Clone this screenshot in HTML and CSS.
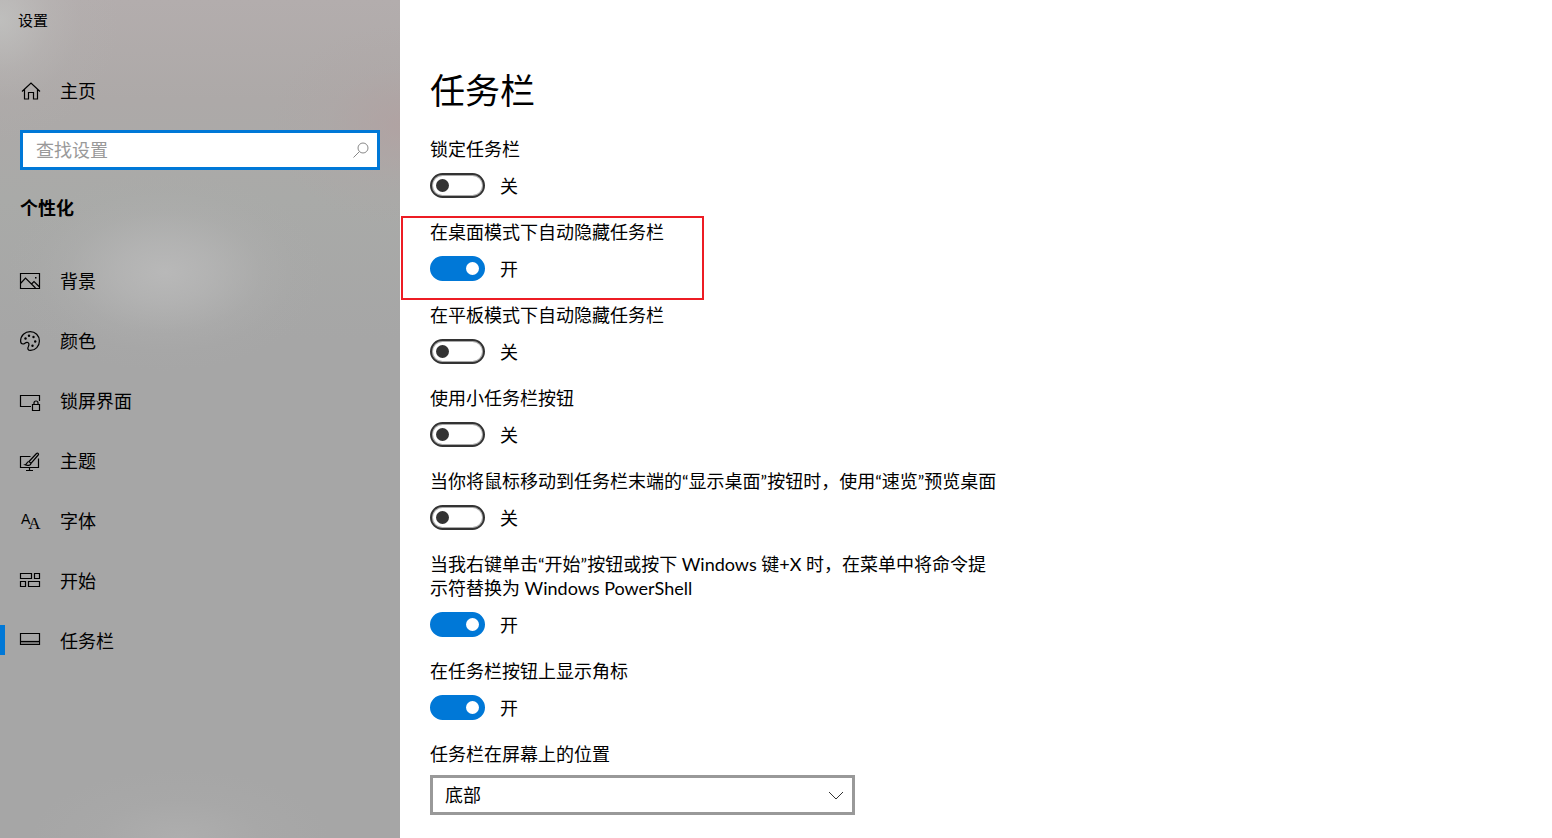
FILE: index.html
```html
<!DOCTYPE html>
<html lang="zh-CN">
<head>
    <meta charset="UTF-8">
    <meta name="viewport" content="width=device-width, initial-scale=1.0">
    <title>设置</title>
    <link rel="stylesheet" href="styles.css">
</head>
<body>
    <div class="window">
        <aside class="sidebar">
            <div class="window-title">设置</div>
            <a class="nav-link" href="#home">
                <svg class="icon" viewBox="0 0 20 20" aria-hidden="true">
                    <path d="M2 10.500 11 2l9 8.500M4.500 8.500v9.500h4v-6.500h5v6.500h4V8.500"/>
                </svg>
                <span>主页</span>
            </a>
            <form class="search">
                <input class="search-input" type="search" placeholder="查找设置" aria-label="查找设置">
                <svg class="search-icon" viewBox="0 0 16 16" aria-hidden="true">
                    <circle cx="10" cy="6" r="5"/>
                    <path d="M6.500 9.500.5 15.500"/>
                </svg>
            </form>
            <h2 class="section-title">个性化</h2>
            <nav class="nav">
                <a class="nav-link" href="#background">
                    <svg class="icon" viewBox="0 0 20 20" aria-hidden="true">
                        <path d="M.5 2.500h19v15H.5zM.5 12.500l5-5.500 10 10M11.500 13l2.500-2.500 5.500 5.500"/>
                        <path class="fill" d="M15 6h1.500v1.500H15z"/>
                    </svg>
                    <span>背景</span>
                </a>
                <a class="nav-link" href="#colors">
                    <svg class="icon" viewBox="0 0 20 20" aria-hidden="true">
                        <path d="M.6 10C.6 4.500 5 .6 10.200.6c5 0 9.200 4 9.200 9.300 0 5.200-4 9.500-8.800 9.500-3 0-3.200-2-2.300-3.700 1-2 1-4-1-4.300-2-.3-2.500 1.600-4.300 1.600C1.300 13 .6 11.700.6 10z"/>
                        <g class="fill">
                            <circle cx="5.500" cy="7.500" r="1.200"/>
                            <circle cx="9" cy="4.800" r="1.200"/>
                            <circle cx="13.500" cy="6" r="1.200"/>
                            <circle cx="15.200" cy="10.500" r="1.200"/>
                            <circle cx="12.500" cy="14.800" r="1.200"/>
                        </g>
                    </svg>
                    <span>颜色</span>
                </a>
                <a class="nav-link" href="#lockscreen">
                    <svg class="icon" viewBox="0 0 20 20" aria-hidden="true">
                        <path d="M11 15.500H.5v-11h19V10M12.500 13.500h7v6h-7zM14 13.500v-1.500a2 2 0 0 1 4 0v1.500"/>
                    </svg>
                    <span>锁屏界面</span>
                </a>
                <a class="nav-link" href="#themes">
                    <svg class="icon" viewBox="0 0 20 20" aria-hidden="true">
                        <path d="M10.500 5.500H.5v11h18V7.500M9.500 16.500v3M6 19.500h7"/>
                        <path d="M9 10.500 16.500 2.500c1.200-1.200 2.700.3 1.700 1.500L11 12.300M9 10.500c-2.500 0-1.500 2.800-4 3.300 2.500 1.200 6 .7 6-1.500z"/>
                    </svg>
                    <span>主题</span>
                </a>
                <a class="nav-link" href="#fonts">
                    <svg class="icon" viewBox="0 0 20 20" aria-hidden="true">
                        <text class="letters" x="1" y="13">A<tspan class="letter-large" dx="-2" dy="5">A</tspan></text>
                    </svg>
                    <span>字体</span>
                </a>
                <a class="nav-link" href="#start">
                    <svg class="icon" viewBox="0 0 20 20" aria-hidden="true">
                        <path d="M.5 2.500h11v5H.5zM14.500 2.500h5v5h-5zM.5 10.500h5v5h-5zM8.500 10.500h11v5h-11z"/>
                    </svg>
                    <span>开始</span>
                </a>
                <a class="nav-link active" href="#taskbar" aria-current="page">
                    <svg class="icon" viewBox="0 0 20 20" aria-hidden="true">
                        <path d="M.5 2.500h19v11H.5z"/>
                        <path class="shade" d="M1 10h18v3H1z"/>
                        <path d="M.5 10.500h19"/>
                    </svg>
                    <span>任务栏</span>
                </a>
            </nav>
        </aside>

        <main class="content">
            <h1 class="page-title">任务栏</h1>

            <div class="setting">
                <label class="setting-label" for="lock">锁定任务栏</label>
                <div class="toggle-row">
                    <input class="toggle" type="checkbox" role="switch" id="lock">
                    <span class="state">关</span>
                </div>
            </div>

            <div class="setting highlighted">
                <label class="setting-label" for="hide-desktop">在桌面模式下自动隐藏任务栏</label>
                <div class="toggle-row">
                    <input class="toggle" type="checkbox" role="switch" id="hide-desktop" checked>
                    <span class="state">开</span>
                </div>
            </div>

            <div class="setting">
                <label class="setting-label" for="hide-tablet">在平板模式下自动隐藏任务栏</label>
                <div class="toggle-row">
                    <input class="toggle" type="checkbox" role="switch" id="hide-tablet">
                    <span class="state">关</span>
                </div>
            </div>

            <div class="setting">
                <label class="setting-label" for="small-buttons">使用小任务栏按钮</label>
                <div class="toggle-row">
                    <input class="toggle" type="checkbox" role="switch" id="small-buttons">
                    <span class="state">关</span>
                </div>
            </div>

            <div class="setting">
                <label class="setting-label" for="peek">当你将鼠标移动到任务栏末端的“显示桌面”按钮时，使用“速览”预览桌面</label>
                <div class="toggle-row">
                    <input class="toggle" type="checkbox" role="switch" id="peek">
                    <span class="state">关</span>
                </div>
            </div>

            <div class="setting">
                <label class="setting-label" for="powershell">当我右键单击“开始”按钮或按下 Windows 键+X 时，在菜单中将命令提示符替换为 Windows PowerShell</label>
                <div class="toggle-row">
                    <input class="toggle" type="checkbox" role="switch" id="powershell" checked>
                    <span class="state">开</span>
                </div>
            </div>

            <div class="setting">
                <label class="setting-label" for="badges">在任务栏按钮上显示角标</label>
                <div class="toggle-row">
                    <input class="toggle" type="checkbox" role="switch" id="badges" checked>
                    <span class="state">开</span>
                </div>
            </div>

            <div class="setting">
                <label class="setting-label" for="position">任务栏在屏幕上的位置</label>
                <div class="select-wrap">
                    <select class="select" id="position">
                        <option>靠左</option>
                        <option>顶部</option>
                        <option>靠右</option>
                        <option selected>底部</option>
                    </select>
                    <svg class="chevron" viewBox="0 0 16 10" aria-hidden="true">
                        <path d="M1 1l7 7 7-7"/>
                    </svg>
                </div>
            </div>
        </main>
    </div>

    <script>
        // Keep the 开/关 text in step with its switch
        document.querySelectorAll('.toggle').forEach(toggle => {
            toggle.addEventListener('change', () => {
                toggle.nextElementSibling.textContent = toggle.checked ? '开' : '关';
            });
        });
    </script>
</body>
</html>
```
FILE: styles.css
```css
*, *::before, *::after {
    box-sizing: border-box;
}
body {
    margin: 0;
    font-family: Lato, "Noto Sans CJK SC", sans-serif;
    font-size: 18px;
    line-height: 24px;
    color: #000;
    background-color: #fff;
}
.window {
    display: flex;
    min-height: 100vh;
}

/* Sidebar */
.sidebar {
    flex: 0 0 400px;
    /* Soft acrylic patches over grey */
    background:
        radial-gradient(circle at 0 20px, rgba(196, 198, 196, 0.7), rgba(190, 190, 188, 0.3) 50px, rgba(184, 184, 182, 0.1) 80px, transparent 120px),
        radial-gradient(ellipse 160px 100px at 165px 272px, rgba(186, 186, 186, 0.9), rgba(184, 184, 184, 0.65) 30%, rgba(180, 180, 180, 0.25) 60%, rgba(176, 176, 176, 0.08) 80%, transparent),
        radial-gradient(ellipse 130px 100px at 400px 125px, rgba(178, 160, 160, 0.7), rgba(176, 164, 164, 0.25) 55%, transparent),
        radial-gradient(ellipse 150px 70px at 180px 100%, rgba(176, 176, 176, 0.8), rgba(172, 172, 172, 0.3) 55%, transparent),
        linear-gradient(#b3adad, #ada9a8 100px, #a9aaa8 200px, #a6a6a6 340px);
}
.window-title {
    padding: 8px 18px;
    font-size: 15px;
}
.nav-link {
    position: relative;
    display: flex;
    align-items: center;
    gap: 20px;
    height: 60px;
    padding: 0 20px;
    color: #000;
    text-decoration: none;
}
.sidebar > .nav-link {
    margin-top: 21px;
}
.nav-link:hover {
    background-color: rgba(0, 0, 0, 0.08);
}
.nav-link.active::before {
    content: "";
    position: absolute;
    left: 0;
    top: 14px;
    width: 5px;
    height: 30px;
    background-color: #0078d7;
}
.icon {
    width: 20px;
    height: 20px;
    overflow: visible;
    fill: none;
    stroke: #000;
    stroke-width: 1.2;
}
.icon .fill {
    fill: #000;
    stroke: none;
}
.icon .shade {
    fill: #7c7c7c;
    stroke: none;
}
.icon .letters {
    fill: #000;
    stroke: none;
    font-family: "Liberation Sans", sans-serif;
    font-size: 14px;
}
.icon .letter-large {
    font-family: "Liberation Serif", serif;
    font-size: 17px;
}
.search {
    position: relative;
    margin: 9px 20px 0;
}
.search-input {
    display: block;
    width: 100%;
    height: 40px;
    padding: 0 40px 0 13px;
    border: 3px solid #0078d7;
    border-radius: 0;
    outline: none;
    background-color: #fff;
    font: inherit;
    appearance: none;
}
.search-input::placeholder {
    color: #999;
    opacity: 1;
}
.search-icon {
    position: absolute;
    right: 11px;
    top: 12px;
    width: 16px;
    height: 16px;
    fill: none;
    stroke: #888;
}
.section-title {
    margin: 26px 20px 31px;
    font-size: 18px;
    font-weight: 700;
}

/* Content */
.content {
    flex: 1;
    min-width: 0;
    padding: 66px 30px 24px;
}
.page-title {
    margin: 0 0 23px;
    font-size: 35px;
    font-weight: 400;
    line-height: 48px;
}
.setting {
    position: relative;
    max-width: 570px;
    margin-bottom: 22px;
}
.setting:last-child {
    margin-bottom: 0;
}
/* Red frame around the setting being pointed out */
.highlighted::after {
    content: "";
    position: absolute;
    left: -29px;
    top: -4px;
    width: 303px;
    height: 84px;
    border: 2px solid #ed1c24;
    pointer-events: none;
}
.setting-label {
    display: block;
}
.toggle-row {
    display: flex;
    align-items: center;
    gap: 15px;
    height: 25px;
    margin-top: 12px;
}
.toggle {
    position: relative;
    width: 55px;
    height: 25px;
    margin: 0;
    border: 2px solid #333;
    border-radius: 13px;
    box-shadow: inset 0 0 0 1px #aaa;
    appearance: none;
    cursor: pointer;
}
.toggle::before {
    content: "";
    position: absolute;
    left: 4px;
    top: 4px;
    width: 13px;
    height: 13px;
    border-radius: 50%;
    background-color: #333;
}
.toggle:checked {
    border-color: #0078d7;
    background-color: #0078d7;
    box-shadow: none;
}
.toggle:checked::before {
    left: 34px;
    background-color: #fff;
}
.select-wrap {
    position: relative;
    max-width: 425px;
    margin-top: 9px;
}
.select {
    display: block;
    width: 100%;
    height: 40px;
    padding: 0 40px 0 12px;
    border: 3px solid #999;
    border-radius: 0;
    background-color: #fff;
    color: #000;
    font: inherit;
    appearance: none;
}
.chevron {
    position: absolute;
    right: 11px;
    top: 16px;
    width: 16px;
    height: 10px;
    fill: none;
    stroke: #333;
    pointer-events: none;
}
```
